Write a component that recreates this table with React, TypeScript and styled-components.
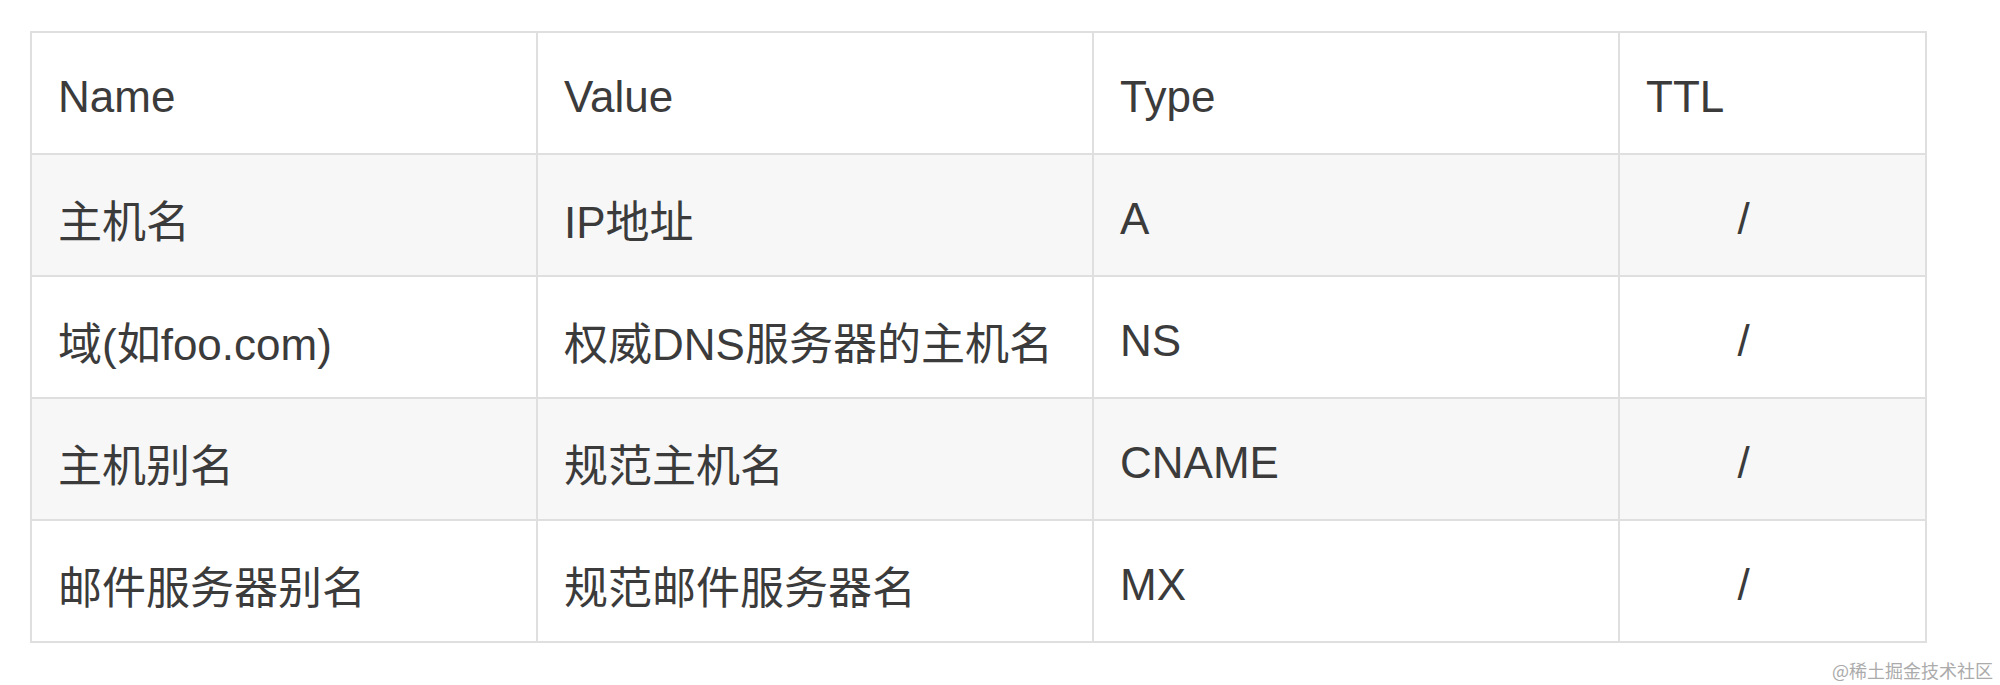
import styled, { createGlobalStyle } from "styled-components"

const GlobalStyle = createGlobalStyle`
  html, body {
    margin: 0;
    padding: 0;
    background: #ffffff;
  }
  body {
    font-family: "Liberation Sans", "Noto Sans CJK SC", sans-serif;
  }
`

const COLUMNS = "506px 556px 526px 307px"

const Page = styled.div`
  display: flex;
  flex-direction: column;
  padding: 31px 0 0 30px;
  width: 2000px;
  height: 685px;
  box-sizing: border-box;
`

const Table = styled.div`
  display: flex;
  flex-direction: column;
  width: fit-content;
  border-top: 2px solid #dfdfdf;
  border-left: 2px solid #dfdfdf;
`

const Row = styled.div<{ striped: boolean }>`
  display: grid;
  grid-template-columns: ${COLUMNS};
  height: 122px;
  background-color: ${({ striped }) => (striped ? "#f7f7f7" : "#ffffff")};
`

const Cell = styled.div<{ center?: boolean }>`
  display: flex;
  align-items: center;
  justify-content: ${({ center }) => (center ? "center" : "flex-start")};
  box-sizing: border-box;
  padding: 8px ${({ center }) => (center ? "84px" : "0")} 0 26px;
  border-right: 2px solid #dfdfdf;
  border-bottom: 2px solid #dfdfdf;
  font-size: 44px;
  color: #3b3b3b;
  white-space: nowrap;
`

const Watermark = styled.div`
  width: 1963px;
  margin-top: 14px;
  text-align: right;
  font-family: "Noto Sans CJK SC", sans-serif;
  font-size: 18px;
  color: #ababab;
`

const header = ["Name", "Value", "Type", "TTL"]

const records = [
  { name: "主机名", value: "IP地址", type: "A" },
  { name: "域(如foo.com)", value: "权威DNS服务器的主机名", type: "NS" },
  { name: "主机别名", value: "规范主机名", type: "CNAME" },
  { name: "邮件服务器别名", value: "规范邮件服务器名", type: "MX" },
]

const App = () => {
  return (
    <Page>
      <GlobalStyle />
      <Table>
        <Row striped={false}>
          {header.map((h) => (
            <Cell key={h}>{h}</Cell>
          ))}
        </Row>
        {records.map((r, index) => (
          <Row key={r.type} striped={index % 2 === 0}>
            <Cell>{r.name}</Cell>
            <Cell>{r.value}</Cell>
            <Cell>{r.type}</Cell>
            <Cell center>/</Cell>
          </Row>
        ))}
      </Table>
      <Watermark>@稀土掘金技术社区</Watermark>
    </Page>
  )
}

export default App
